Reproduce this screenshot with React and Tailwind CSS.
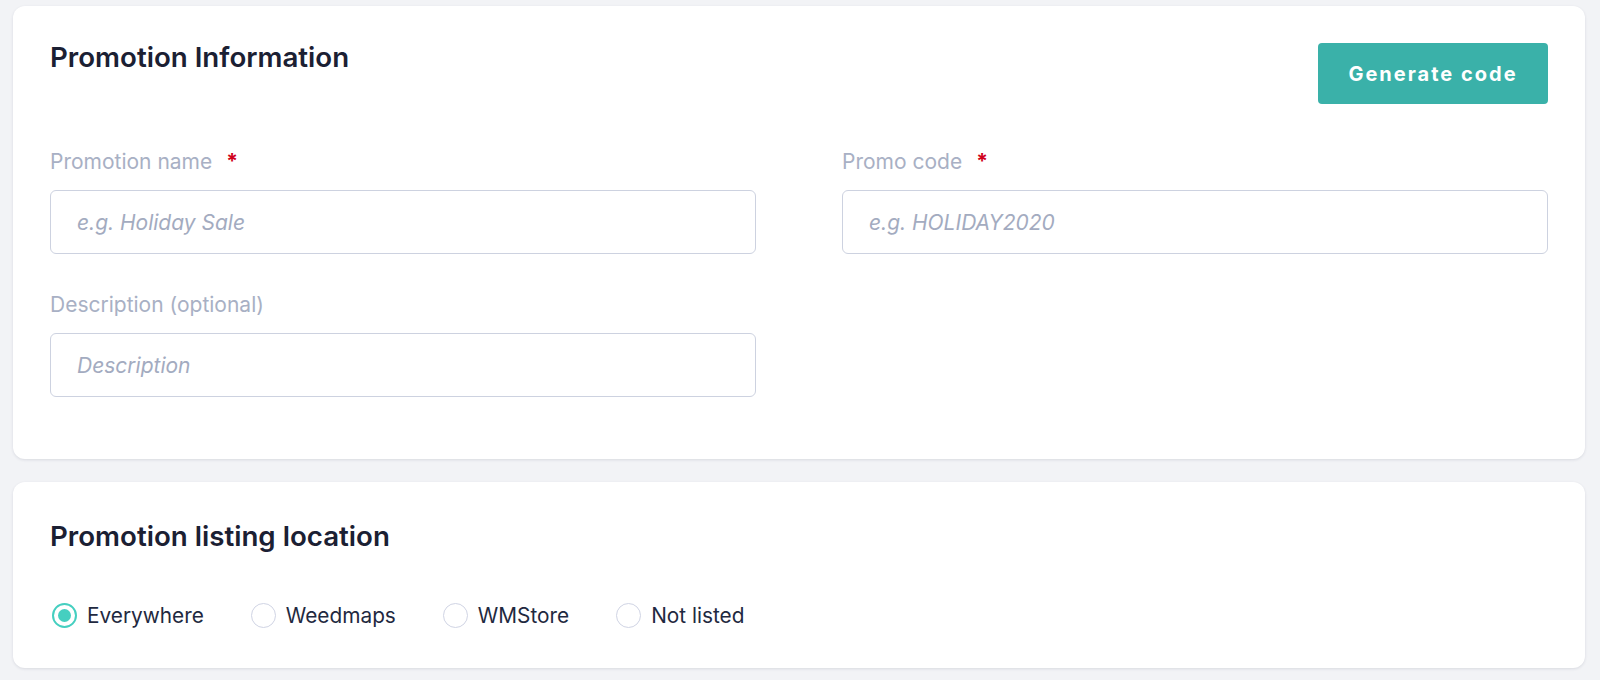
import React, { useState } from 'react';

const font = { fontFamily: 'Inter, "Noto Sans", sans-serif' };

const Field = ({ label, required, placeholder }) => (
  <div>
    <label className="flex items-start text-[21px] leading-[24px] text-[#a8b0c4] mb-[16px]">
      {label}
      {required && <span className="ml-[14px] text-[#d0021b] font-bold">*</span>}
    </label>
    <input
      placeholder={placeholder}
      className="w-full h-[64px] rounded-[6px] border border-[#cdd2e0] bg-white px-[26px] text-[21px] italic text-[#1f2940] placeholder:text-[#a3abc0] outline-none"
    />
  </div>
);

const Radio = ({ label, checked, onClick }) => (
  <button onClick={onClick} className="flex items-center gap-[10px]">
    <span
      className={
        checked
          ? 'w-[25px] h-[25px] rounded-full border-2 border-[#45cfc0] flex items-center justify-center'
          : 'w-[25px] h-[25px] rounded-full border-[1.5px] border-[#d0d4e4]'
      }
    >
      {checked && <span className="w-[13px] h-[13px] rounded-full bg-[#45cfc0]" />}
    </span>
    <span className="text-[20.8px] leading-[25px] text-[#1f2940]">{label}</span>
  </button>
);

export default function App() {
  const [where, setWhere] = useState('Everywhere');

  return (
    <div className="min-h-screen bg-[#f2f3f6] pt-[6px] pl-[13px] pr-[15px] pb-[12px]" style={font}>
      {/* Promotion info */}
      <div className="bg-white rounded-[12px] shadow-[0_1px_3px_rgba(30,40,70,0.12)] px-[37px] pt-[34px] pb-[62px]">
        <div className="flex justify-between items-start">
          <h2 className="text-[27.7px] leading-[34px] font-semibold text-[#1b2033]">Promotion Information</h2>
          <button className="mt-[3px] h-[61px] w-[230px] rounded-[4px] bg-[#3ab1a9] text-white text-[20px] font-bold tracking-[2px]">
            Generate code
          </button>
        </div>

        <div className="grid grid-cols-2 gap-x-[86px] gap-y-[39px] mt-[46px]">
          <Field label="Promotion name" required placeholder="e.g. Holiday Sale" />
          <Field label="Promo code" required placeholder="e.g. HOLIDAY2020" />
          <Field label="Description (optional)" placeholder="Description" />
        </div>
      </div>

      {/* Listing location */}
      <div className="mt-[23px] bg-white rounded-[12px] shadow-[0_1px_3px_rgba(30,40,70,0.12)] px-[37px] pt-[37px] pb-[40px]">
        <h2 className="text-[27.7px] leading-[34px] font-semibold text-[#1b2033]">Promotion listing location</h2>
        <div className="flex items-center gap-[47px] mt-[50px] pl-[2px]">
          {['Everywhere', 'Weedmaps', 'WMStore', 'Not listed'].map((o) => (
            <Radio key={o} label={o} checked={where === o} onClick={() => setWhere(o)} />
          ))}
        </div>
      </div>
    </div>
  );
}
